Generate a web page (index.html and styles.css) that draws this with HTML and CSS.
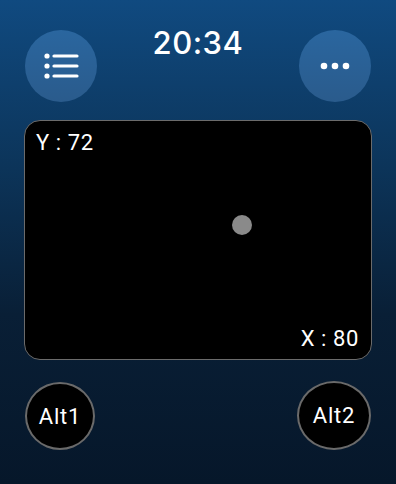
FILE: index.html
```html
<!DOCTYPE html>
<html>
<head>
<meta charset="utf-8">
<link rel="stylesheet" href="styles.css">
</head>
<body>
<div class="screen">
  <div class="header">
    <div class="round-btn">
      <svg width="36" height="28" viewBox="0 0 36 28">
        <circle cx="4" cy="4" r="2.6" fill="#fff"/>
        <circle cx="4" cy="14" r="2.6" fill="#fff"/>
        <circle cx="4" cy="24" r="2.6" fill="#fff"/>
        <line x1="11" y1="4" x2="34" y2="4" stroke="#fff" stroke-width="3.2" stroke-linecap="round"/>
        <line x1="11" y1="14" x2="34" y2="14" stroke="#fff" stroke-width="3.2" stroke-linecap="round"/>
        <line x1="11" y1="24" x2="34" y2="24" stroke="#fff" stroke-width="3.2" stroke-linecap="round"/>
      </svg>
    </div>
    <div class="time">20:34</div>
    <div class="round-btn">
      <svg width="30" height="8" viewBox="0 0 30 8">
        <circle cx="4" cy="4" r="3.3" fill="#fff"/>
        <circle cx="15" cy="4" r="3.3" fill="#fff"/>
        <circle cx="26" cy="4" r="3.3" fill="#fff"/>
      </svg>
    </div>
  </div>
  <div class="pad">
    <div class="label-y">Y : 72</div>
    <div class="dot"></div>
    <div class="label-x">X : 80</div>
  </div>
  <div class="footer">
    <div class="alt-btn">Alt1</div>
    <div class="alt-btn alt-btn-wide">Alt2</div>
  </div>
</div>
</body>
</html>
```
FILE: styles.css
```css
html, body {
  margin: 0;
  padding: 0;
}
body {
  width: 396px;
  height: 484px;
  overflow: hidden;
  font-family: Inter, "Noto Sans", sans-serif;
  color: #fff;
}
.screen {
  width: 396px;
  height: 484px;
  box-sizing: border-box;
  padding: 30px 24px 0 24px;
  background: linear-gradient(180deg, #104a80 0%, #0c3459 35%, #091f36 65%, #06172a 100%);
  display: flex;
  flex-direction: column;
}
.header {
  display: flex;
  justify-content: space-between;
  align-items: flex-start;
  padding: 0 1px 0 1px;
  height: 72px;
}
.round-btn {
  width: 72px;
  height: 72px;
  border-radius: 50%;
  background: linear-gradient(180deg, #2a669f 0%, #2a5b8c 100%);
  display: flex;
  align-items: center;
  justify-content: center;
}
.time {
  font-size: 31px;
  font-weight: 500;
  line-height: 36px;
  margin-top: -5px;
  letter-spacing: 0.5px;
}
.pad {
  margin-top: 18px;
  height: 240px;
  box-sizing: border-box;
  border: 1.5px solid #6b6b6b;
  border-radius: 16px;
  background: #000;
  position: relative;
}
.label-y {
  position: absolute;
  left: 11px;
  top: 9px;
  font-family: Roboto, sans-serif;
  font-size: 22px;
  letter-spacing: 0.6px;
}
.label-x {
  position: absolute;
  right: 12px;
  bottom: 8px;
  font-family: Roboto, sans-serif;
  font-size: 22px;
  letter-spacing: 0.6px;
}
.dot {
  position: absolute;
  left: 207px;
  top: 94px;
  width: 20px;
  height: 20px;
  border-radius: 50%;
  background: #8a8a8a;
}
.footer {
  margin-top: 22px;
  display: flex;
  justify-content: space-between;
  align-items: flex-start;
  padding: 0 1px 0 1px;
}
.alt-btn {
  width: 70px;
  height: 68px;
  box-sizing: border-box;
  border-radius: 50%;
  border: 2px solid #6a6a6a;
  background: #000;
  display: flex;
  align-items: center;
  justify-content: center;
  font-family: Roboto, sans-serif;
  font-size: 22px;
  letter-spacing: 0.8px;
}
.alt-btn-wide {
  width: 74px;
  height: 69px;
  margin-top: -1px;
}
```
